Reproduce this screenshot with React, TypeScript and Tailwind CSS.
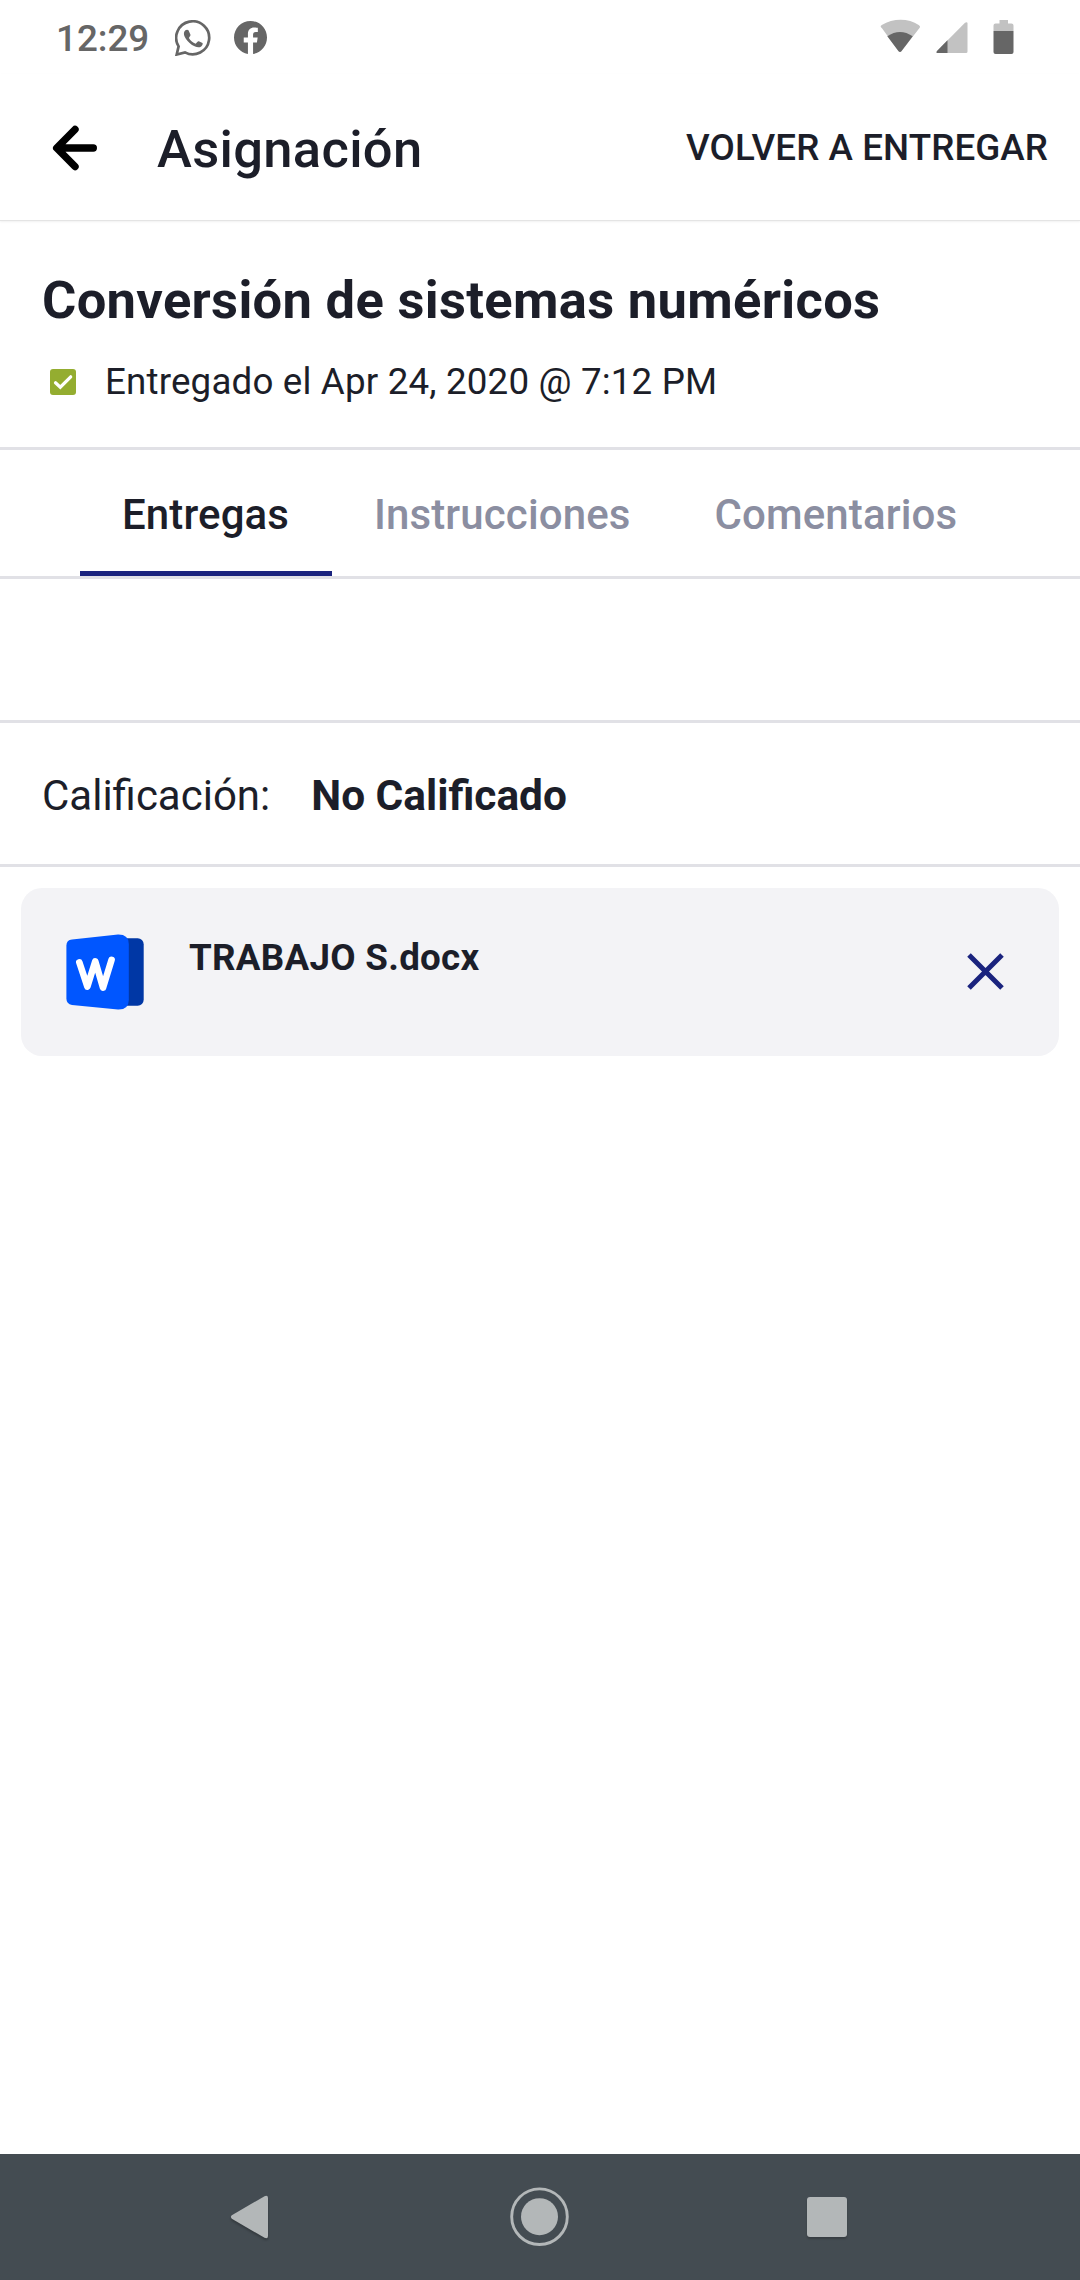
import React from "react";

function WhatsAppIcon() {
  return (
    <svg className="ml-[25px] mb-[2px] h-9 w-9 shrink-0" viewBox="0 0 36 36" fill="none">
      <path
        d="M1.7 34.5 L3.6 26.4 A16.5 16.5 0 1 1 10 32.4 Z"
        stroke="#666"
        strokeWidth="2.7"
        strokeLinejoin="miter"
      />
      <path
        d="M10.1 10.5 C11 9.5 12.7 9.3 13.5 10.2 L15.4 14.6 C15.7 15.5 15 16.5 13.9 17.9 C15.6 20.6 17.8 22.5 20.7 23.7 C22.2 22.2 22.8 21 23.8 21.3 L27.5 23 C28 23.5 27.6 25.4 26.2 26.4 C23.5 28.2 20 26.8 17 25 C13.5 22.7 11.2 19.6 9.7 16.8 C8.5 14.4 8.7 12 10.1 10.5 Z"
        fill="#666"
      />
    </svg>
  );
}

function FacebookIcon() {
  return (
    <svg className="ml-[23px] mb-[3px] h-[33px] w-[33px] shrink-0" viewBox="0 0 24 24" fill="#666">
      <path d="M24 12.07C24 5.41 18.63 0 12 0S0 5.41 0 12.07C0 18.1 4.39 23.09 10.13 24v-8.44H7.08v-3.49h3.05V9.41c0-3.02 1.79-4.69 4.53-4.69 1.31 0 2.68.24 2.68.24v2.97h-1.51c-1.49 0-1.96.93-1.96 1.89v2.25h3.33l-.53 3.49h-2.8V24C19.61 23.09 24 18.1 24 12.07z" />
    </svg>
  );
}

function StatusBar() {
  return (
    <div className="flex h-[74px] items-center pl-[56px] pr-[64px] pt-[3px] text-[#666]">
      <span className="mr-[1px] text-[36.75px] leading-[44px] font-medium">12:29</span>
      <WhatsAppIcon />
      <FacebookIcon />
      <svg className="mb-[4px] ml-auto h-[36px] w-[136px]" viewBox="0 0 136 36">
        <path d="M2 9.3 Q-0.6 7.6 1.8 6 C13 -1 28.500 -1 38.700 6 Q41 7.600 39.300 9.300 L21.400 32.200 Q20 33.800 18.600 32.200 Z" fill="#c2c2c2" />
        <path d="M7.300 17.200 Q20 8.700 32.700 17.200 L21.400 32.200 Q20 33.800 18.600 32.200 Z" fill="#666" />
        <path d="M57 32 L85 3.700 Q87.500 2.500 87.500 4.500 V32.500 Q87.500 34 86 34 H58 Q55.500 34 57 32 Z" fill="#c2c2c2" />
        <path d="M57 32 L67.500 21.300 V34 H58 Q55.500 34 57 32 Z" fill="#666" />
        <path d="M119.500 1 h8.500 v3.500 h3.500 q2 0 2 2 V12 h-20 V6.500 q0 -2 2 -2 h4 Z" fill="#c2c2c2" />
        <path d="M113.500 12 h20 v21 q0 2 -2 2 h-16 q-2 0 -2 -2 Z" fill="#666" />
      </svg>
    </div>
  );
}

function Header() {
  return (
    <header className="flex h-[147px] items-center border-b border-[#e4e4e4] pl-[51px] pr-[32px] shadow-[0_1px_2px_rgba(0,0,0,0.06)]">
      <svg className="mt-[2px] h-[48px] w-[48px]" viewBox="0 0 48 48" fill="none" stroke="#000" strokeWidth="7.4" strokeLinecap="round" strokeLinejoin="round">
        <path d="M42.300 24 H6 M24 5.500 L5.700 24 L24 42.500" />
      </svg>
      <h1 className="ml-[58px] mt-[3px] text-[52.5px] leading-[60px] font-medium tracking-[0.32px]">Asignación</h1>
      <button className="ml-auto mt-[2px] text-[36.75px] leading-[44px] font-medium tracking-[0.08px]">VOLVER A ENTREGAR</button>
    </header>
  );
}

function Summary() {
  return (
    <section className="h-[229px] border-b-[3px] border-[#e1e1e6] pl-[42px] pt-[49px]">
      <h2 className="text-[52.5px] leading-[60px] font-bold tracking-[0.31px]">Conversión de sistemas numéricos</h2>
      <div className="mt-[30px] flex items-center">
        <svg className="ml-[8px] h-[26px] w-[26px]" viewBox="0 0 26 26">
          <rect width="26" height="26" rx="3" fill="#94ad30" />
          <path d="M5.500 13.800 L10.300 18.200 L20.700 7.800" fill="none" stroke="#fff" strokeWidth="3.200" strokeLinecap="round" />
        </svg>
        <p className="ml-[29px] text-[36.75px] leading-[44px] tracking-[0.16px]">Entregado el Apr 24, 2020 @ 7:12 PM</p>
      </div>
    </section>
  );
}

function Tabs() {
  return (
    <nav className="flex h-[129px] border-b-[3px] border-[#e1e1e6] pl-[80px] text-[42px] leading-[50px] font-medium tracking-[0.12px] text-[#8b8ea1]">
      <div className="w-[252px] border-b-[5px] border-[#1a237e] pl-[42px] pt-[40px] text-[#1c1e29]">Entregas</div>
      <div className="px-[42px] pt-[40px]">Instrucciones</div>
      <div className="px-[42px] pt-[40px]">Comentarios</div>
    </nav>
  );
}

function WordIcon() {
  return (
    <svg className="ml-[45px] h-[76px] w-[78px]" viewBox="0 0 78 76">
      <rect x="44" y="4.300" width="33.700" height="67.500" rx="6" fill="#0037a5" />
      <path d="M6 5.400 L52 0.500 Q62.800 0.300 62.800 10 V66 Q62.800 75.800 52 75.500 L6 70.900 Q0.400 70 0.400 64.500 V11.500 Q0.400 6 6 5.400 Z" fill="#0056ff" />
      <path d="M13.300 28.300 L21.400 52.600 L29.300 27.300 L37 53.700 L45.600 25.800" fill="none" stroke="#fff" strokeWidth="6.600" strokeLinecap="round" strokeLinejoin="round" />
    </svg>
  );
}

function Attachment() {
  return (
    <div className="mx-[21px] mt-[21px] flex h-[168px] items-center rounded-[21px] bg-[#f3f3f6]">
      <WordIcon />
      <span className="mb-[29px] ml-[45px] text-[36.75px] leading-[44px] font-bold tracking-[0.27px]">TRABAJO S.docx</span>
      <svg className="mb-[1px] ml-auto mr-[55px] h-[37px] w-[37px]" viewBox="0 0 37 37" stroke="#1a237e" strokeWidth="5">
        <path d="M2 2 L35 35 M35 2 L2 35" />
      </svg>
    </div>
  );
}

function NavigationBar() {
  return (
    <footer className="mt-auto flex h-[126px] items-center bg-[#444c52]">
      <svg className="ml-[230px] h-[46px] w-[40px] drop-shadow-[0_2px_1px_rgba(0,0,0,0.25)]" viewBox="0 0 40 46" fill="#b3b7b8">
        <path d="M1.800 21.300 L34.500 2.200 Q38 0.800 38 4 V42 Q38 45.200 34.500 43.800 L1.800 24.700 Q0 23 1.800 21.300 Z" />
      </svg>
      <svg className="ml-[240px] h-[60px] w-[60px]" viewBox="0 0 60 60">
        <circle cx="29.500" cy="29.700" r="27.800" fill="none" stroke="#b3b7b8" strokeWidth="2.900" />
        <circle cx="29.500" cy="29.700" r="18.500" fill="#b3b7b8" />
      </svg>
      <div className="ml-[237px] h-[40px] w-[40px] rounded-[3px] bg-[#b3b7b8] shadow-[0_2px_2px_rgba(0,0,0,0.2)]" />
    </footer>
  );
}

export default function App() {
  return (
    <main className="flex h-[2280px] w-[1080px] flex-col overflow-hidden bg-white font-['Roboto',sans-serif] text-[#1c1e29]">
      <StatusBar />
      <Header />
      <Summary />
      <Tabs />
      <div className="h-[144px] border-b-[3px] border-[#e1e1e6]" />
      <div className="flex h-[144px] items-center gap-[41px] border-b-[3px] border-[#e1e1e6] pl-[42px] pt-[4px] text-[42px] leading-[50px]">
        <span>Calificación:</span>
        <strong className="font-bold [font-size:42.4px]">No Calificado</strong>
      </div>
      <Attachment />
      <NavigationBar />
    </main>
  );
}
